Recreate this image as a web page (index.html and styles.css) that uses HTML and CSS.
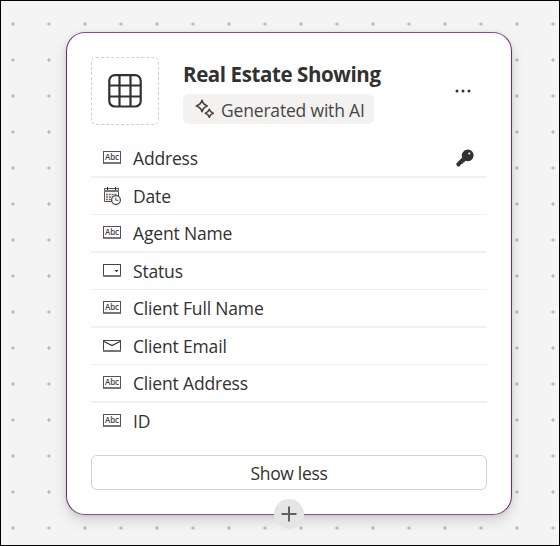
FILE: index.html
```html
<!DOCTYPE html>
<html lang="en">
<head>
<meta charset="utf-8">
<title>Real Estate Showing</title>
<link rel="stylesheet" href="styles.css">
</head>
<body>
<main class="canvas">
  <section class="card">
    <header class="header">
      <div class="thumb">
        <svg width="34" height="34" viewBox="0 0 34 34" fill="none" stroke="#323130" stroke-width="2.2"><rect x="1.3" y="1.1" width="31.4" height="31.4" rx="5.5"/><path d="M11.5 1v32M22.5 1v32M1 11.5h32M1 22.5h32"/></svg>
      </div>
      <div class="heading">
        <h1 class="title">Real Estate Showing</h1>
        <div class="badge">
          <svg width="20" height="20" viewBox="0 0 20 20" fill="none" stroke="#484644" stroke-width="1.6" stroke-linejoin="round"><path d="M7 1.3Q8.2 5.6 12.3 7Q8.2 8.4 7 12.7Q5.8 8.4 1.3 7Q5.8 5.6 7 1.3ZM14.3 10.2Q15.2 13.2 18.3 14.2Q15.2 15.2 14.3 18.3Q13.4 15.2 10.3 14.2Q13.4 13.2 14.3 10.2Z"/></svg>
          <span class="badge-text">Generated with AI</span>
        </div>
      </div>
      <svg class="more" width="16" height="4" viewBox="0 0 16 4" fill="#323130"><circle cx="2" cy="2" r="1.5"/><circle cx="8" cy="2" r="1.5"/><circle cx="14" cy="2" r="1.5"/></svg>
    </header>
    <ul class="fields">
      <li class="field"><span class="abc">Abc</span><span class="label">Address</span>
        <svg class="key" width="18" height="18" viewBox="0 0 18 18"><path d="M11.6.6a5.8 5.8 0 1 1-1.9 11.2L8 13.4H6.7v1.5H5.3L3.8 17Q2.6 18 1.2 17L.4 15.8Q0 14.8.8 13.9L6.2 8.5A5.8 5.8 0 0 1 11.6.6Z" fill="#323130"/><circle cx="13.3" cy="4.5" r="1.1" fill="#fff"/></svg></li>
      <li class="field"><svg class="icon" width="18" height="18" viewBox="0 0 18 18" fill="none"><path d="M1.5 1.5h14v13h-14z" fill="#fff" stroke="#6b4c3c"/><path d="M1 4h15" stroke="#77747d" stroke-width="2.2"/><path d="M4.5 0v3M12.5 0v3" stroke="#323130"/><path d="M3 7.5h11M3 10h11M3 12.5h7" stroke="#66605f" stroke-width="1.5" stroke-dasharray="1.9 .9"/><circle cx="13" cy="13" r="4.4" fill="#fff" stroke="#465363" stroke-width="1.3"/><path d="M12.8 10.5v2.8h2.5" stroke="#465363"/></svg><span class="label">Date</span></li>
      <li class="field"><span class="abc">Abc</span><span class="label">Agent Name</span></li>
      <li class="field"><svg class="icon" width="18" height="13" viewBox="0 0 18 13"><rect x=".5" y=".5" width="17" height="12" fill="#fff" stroke="#45414f"/><path d="M0 12h18" stroke="#77747d" stroke-width="2"/><path d="M11.5 6h4l-2 2.2Z" fill="#323130"/></svg><span class="label">Status</span></li>
      <li class="field"><span class="abc">Abc</span><span class="label">Client Full Name</span></li>
      <li class="field"><svg class="icon" width="18" height="12" viewBox="0 0 18 12" fill="none"><rect x=".5" y=".5" width="17" height="11" stroke="#45414f"/><path d="M0 11h18" stroke="#77747d" stroke-width="2"/><path d="M1 1.5l8 4 8-4" stroke="#34313a" stroke-width="1.3"/></svg><span class="label">Client Email</span></li>
      <li class="field"><span class="abc">Abc</span><span class="label">Client Address</span></li>
      <li class="field"><span class="abc">Abc</span><span class="label">ID</span></li>
    </ul>
    <button class="toggle">Show less</button>
    <div class="add"><svg width="16" height="16" viewBox="0 0 16 16" stroke="#616161" stroke-width="2"><path d="M8 .5v15M.5 8h15"/></svg></div>
  </section>
</main>
</body>
</html>
```
FILE: styles.css
```css
* { box-sizing: border-box; }

body {
  margin: 0;
  font-family: "Open Sans", "Noto Sans", sans-serif;
  color: #323130;
}

.canvas {
  width: 560px;
  height: 546px;
  padding: 31px 0 0 65px;
  border: 1px solid #000;
  background: radial-gradient(circle at 18px 18px, #bdbdbd 1.2px, #bdbdbd00 2.1px) -5px 6px / 36px 36px #f4f4f4;
  background-origin: border-box;
  overflow: hidden;
}

.card {
  position: relative;
  width: 446px;
  height: 483px;
  padding: 24px;
  border: 1px solid #742774;
  border-top-color: #904a90;
  border-bottom-color: #904a90;
  border-radius: 19px;
  background: #fff;
  box-shadow: 0 6px 14px rgba(0, 0, 0, .13), 0 1px 4px rgba(0, 0, 0, .1);
}

.header { display: flex; height: 82px; }

.thumb {
  display: flex;
  align-items: center;
  justify-content: center;
  width: 68px;
  height: 68px;
  border: 1px dashed #d0d0d0;
  border-radius: 5px;
}

.heading { margin-left: 24px; }

.title {
  height: 37px;
  margin: 0;
  font-size: 20.5px;
  line-height: 35px;
  font-weight: 700;
  letter-spacing: -.4px;
  white-space: nowrap;
}

.badge {
  display: flex;
  align-items: center;
  width: 191px;
  height: 30px;
  padding-left: 12px;
  border-radius: 6px;
  background: #f3f2f1;
  font-size: 17.5px;
  color: #484644;
  white-space: nowrap;
}

.badge-text { margin: 2px 0 0 6px; letter-spacing: -.18px; }

.more { margin: 32px 16px 0 auto; }

.fields {
  margin: 0;
  padding: 0;
  border-top: 1px solid #fafafa;
  list-style: none;
}

.field {
  display: flex;
  align-items: center;
  height: 37.5px;
  padding: 0 13px 0 12px;
  border-bottom: 1.5px solid #f0f0f0;
  font-size: 17.5px;
}

.field:nth-child(odd):not(:last-child) { border-bottom-width: 2px; }

.field:last-child { border-color: #fafafa; }

.icon { flex: none; }

.abc {
  width: 18px;
  height: 13px;
  border: 1px solid #55505f;
  border-bottom: 2px solid #77747d;
  font-size: 8px;
  line-height: 10px;
  font-weight: 600;
  letter-spacing: -.1px;
  text-align: center;
  color: #45414f;
}

.label { margin: .5px 0 0 12px; letter-spacing: -.17px; white-space: nowrap; }

.key { margin-left: auto; }

.toggle {
  display: block;
  width: 396px;
  height: 35px;
  margin-top: 15px;
  padding: 0;
  border: 1px solid #d1d1d1;
  border-radius: 6px;
  background: #fff;
  font: 17.5px "Open Sans", sans-serif;
  letter-spacing: -.3px;
  color: #323130;
}

.add {
  position: absolute;
  bottom: -15px;
  left: 207px;
  display: flex;
  align-items: center;
  justify-content: center;
  width: 30px;
  height: 30px;
  border-radius: 50%;
  background: #e5e5e5;
}
```
